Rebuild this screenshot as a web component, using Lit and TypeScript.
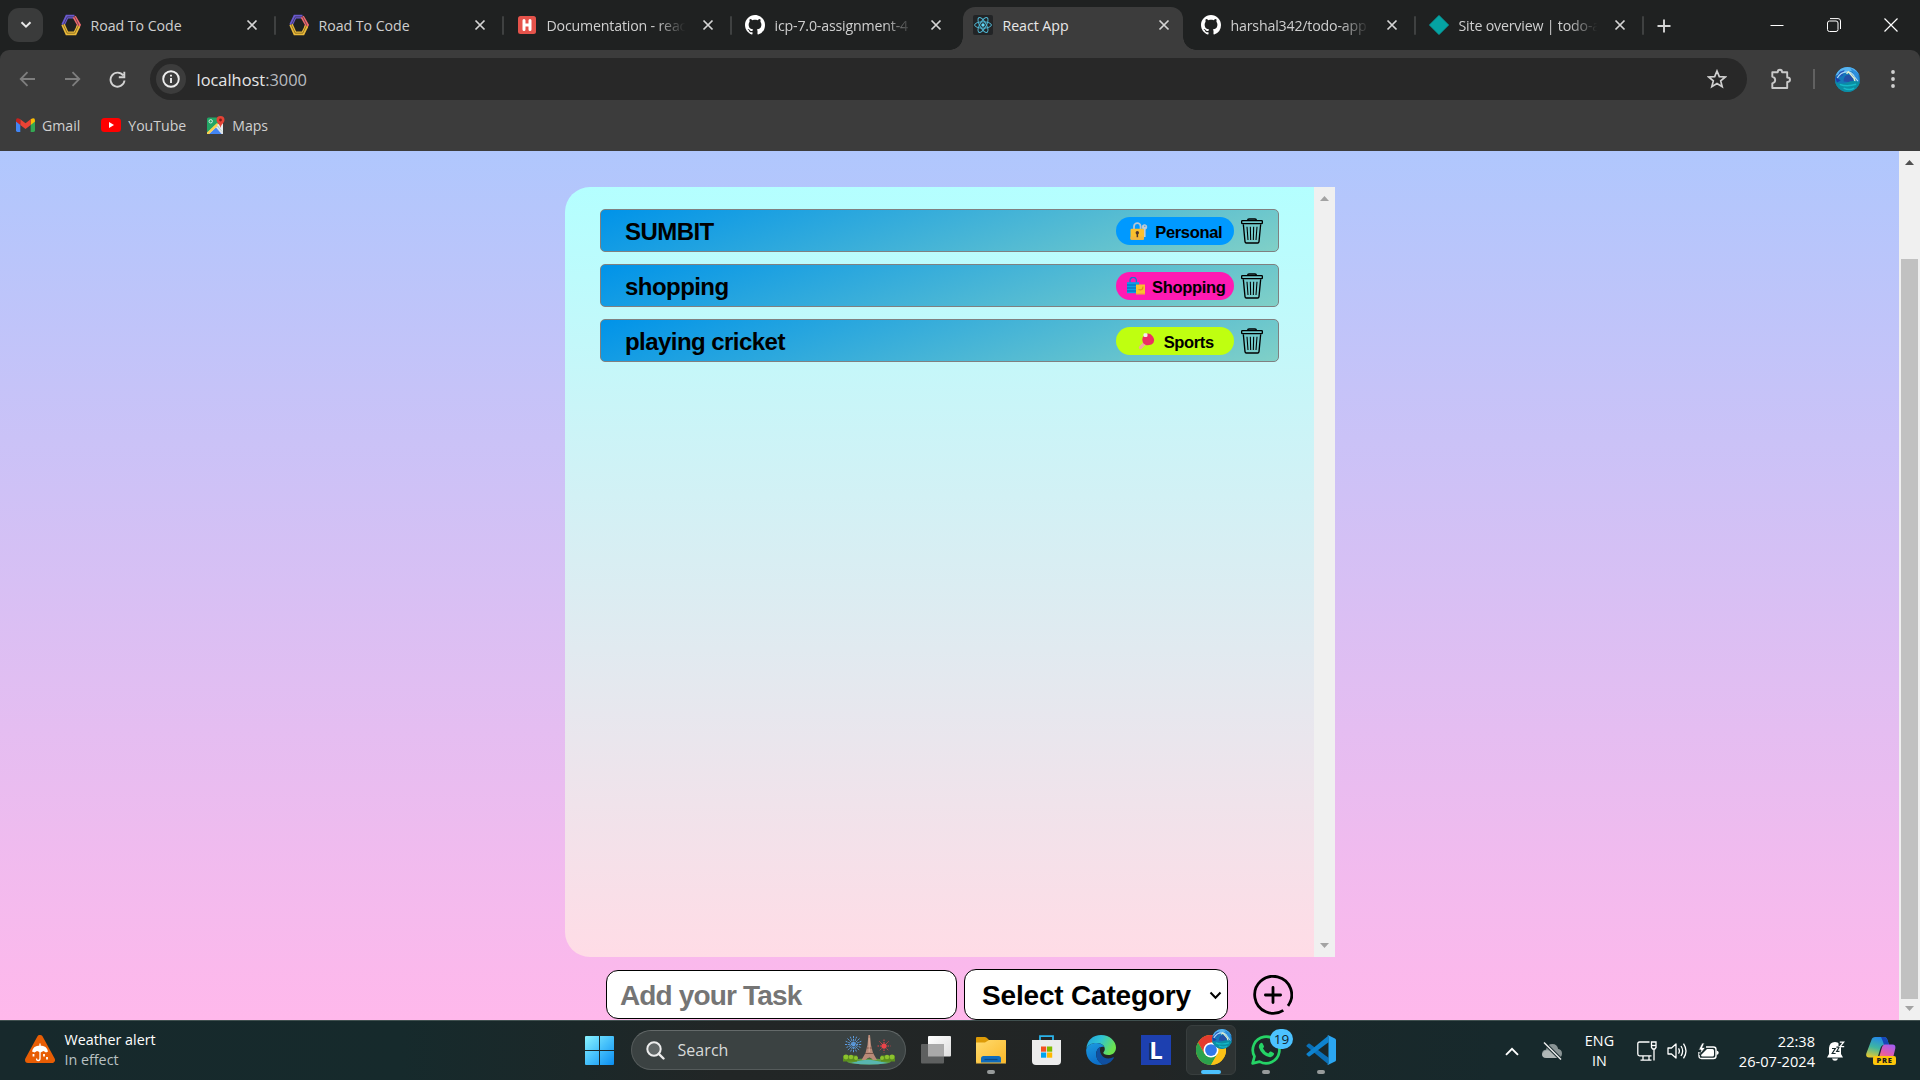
import { LitElement, html, css, nothing, type TemplateResult } from "lit";
import { customElement, property } from "lit/decorators.js";
import { classMap } from "lit/directives/class-map.js";

/* ---------- icons ---------- */

const hexLogo = html`<svg width="20" height="22" viewBox="0 0 20 22" fill="none" stroke-width="3.6">
  <path d="M2 11 L6 2.600 H13.500" stroke="#6a5acd" /><path d="M13.200 2.600 L18 11 L16.600 13.500" stroke="#ef6a6e" />
  <path d="M2 10.500 L6 19.400 H14 L17.600 12" stroke="#e9b93a" />
  <path d="M2.400 10.900 L6.300 2.800 H13.600 L17.600 10.900" stroke="#2a2540" stroke-width=".6" />
  <path d="M2.400 11.100 L6.200 19.200 H13.800 L17.600 11.100" stroke="#5a4613" stroke-width=".6" />
</svg>`;

const hashLogo = html`<svg width="18" height="18" viewBox="0 0 18 18">
  <rect width="18" height="18" rx="2.5" fill="#e5534b" />
  <path d="M6 4.600V13.400M12 4.600V13.400M6 9H12" stroke="#fff" stroke-width="3" stroke-linecap="round" />
</svg>`;

const github = html`<svg width="20" height="20" viewBox="0 0 16 16">
  <path fill="#fff" fill-rule="evenodd" d="M8 0C3.58 0 0 3.58 0 8c0 3.54 2.29 6.53 5.47 7.59.4.07.55-.17.55-.38 0-.19-.01-.82-.01-1.49-2.01.37-2.53-.49-2.69-.94-.09-.23-.48-.94-.82-1.13-.28-.15-.68-.52-.01-.53.63-.01 1.08.58 1.23.82.72 1.21 1.87.87 2.33.66.07-.52.28-.87.51-1.07-1.78-.2-3.64-.89-3.64-3.95 0-.87.31-1.59.82-2.15-.08-.2-.36-1.02.08-2.12 0 0 .67-.21 2.2.82.64-.18 1.32-.27 2-.27s1.36.09 2 .27c1.53-1.04 2.2-.82 2.2-.82.44 1.1.16 1.92.08 2.12.51.56.82 1.27.82 2.15 0 3.07-1.87 3.75-3.65 3.95.29.25.54.73.54 1.48 0 1.07-.01 1.93-.01 2.2 0 .21.15.46.55.38A8.01 8.01 0 0 0 16 8c0-4.42-3.58-8-8-8z" />
</svg>`;

const react = html`<svg width="20" height="20" viewBox="0 0 20 20">
  <rect width="20" height="20" rx="2" fill="#222426" />
  <g fill="none" stroke="#4fb6d3" stroke-width="1">
    <ellipse cx="10" cy="10" rx="8.4" ry="3.2" />
    <ellipse cx="10" cy="10" rx="8.4" ry="3.2" transform="rotate(60 10 10)" />
    <ellipse cx="10" cy="10" rx="8.4" ry="3.2" transform="rotate(120 10 10)" />
  </g>
  <circle cx="10" cy="10" r="1.7" fill="#61dafb" />
</svg>`;

const diamond = html`<svg width="20" height="20" viewBox="0 0 20 20">
  <path d="M10 .5 L19.5 10 L10 19.5 L.5 10Z" fill="#05a3a3" stroke="#05a3a3" stroke-linejoin="round" />
</svg>`;

const cross = html`<svg width="12" height="12" viewBox="0 0 12 12">
  <path d="M1.5 1.5L10.5 10.5M10.5 1.5L1.5 10.5" stroke="#d5d5d5" stroke-width="1.7" />
</svg>`;

const gmail = html`<svg width="19" height="14" viewBox="0 0 19 14">
  <path d="M0 3V12.6Q0 14 1.4 14H4.3V5.5Z" fill="#4285f4" />
  <path d="M19 3V12.6Q19 14 17.6 14H14.7V5.5Z" fill="#34a853" />
  <path d="M14.7 1.2L16.2.4Q19-.6 19 2.4V3.6L14.7 7Z" fill="#fbbc04" />
  <path d="M4.3 1.2L9.5 5.2L14.7 1.2V7L9.5 11L4.3 7Z" fill="#ea4335" />
  <path d="M4.3 1.2L2.8.4Q0-.6 0 2.4V3.6L4.3 7Z" fill="#c5221f" />
</svg>`;

const youtube = html`<svg width="20" height="14" viewBox="0 0 20 14">
  <rect width="20" height="14" rx="3.5" fill="#f00" /><path d="M8 4V10L13 7Z" fill="#fff" />
</svg>`;

const maps = html`<svg width="18" height="18" viewBox="0 0 18 18">
  <rect y="1.5" width="16" height="16.5" rx="1.5" fill="#22a565" />
  <path d="M0 17L9 8.5L16 16V18H1Z" fill="#dfe3e8" />
  <path d="M2 18L9 11.5L14.5 18Z" fill="#4285f4" />
  <path d="M0 16.5L10 7L12 8.6L2 18H0Z" fill="#fbd14b" />
  <path d="M10 9L16 5V16.5Z" fill="#e9ecef" />
  <circle cx="3.7" cy="5.3" r="1.7" fill="none" stroke="#d8f0e2" stroke-width="1" />
  <path d="M13.5 0A4 4 0 0 1 17.5 4C17.5 7 14 8 13.5 12C13 8 9.5 7 9.5 4A4 4 0 0 1 13.5 0Z" fill="#e54335" />
  <circle cx="13.5" cy="4" r="1.4" fill="#7c1c17" />
</svg>`;

const avatar = (size: number) => html`<svg width=${size} height=${size} viewBox="0 0 26 26">
  <defs><clipPath id="disc"><circle cx="13" cy="13" r="13" /></clipPath></defs>
  <g clip-path="url(#disc)">
    <rect width="26" height="26" fill="#1577b8" />
    <path d="M0 0H26V9Q20 3 13 5T0 9Z" fill="#58b4f0" />
    <path d="M1 12L5 5L10 3L8 9Z" fill="#2456b8" />
    <path d="M16 1L24 6L25 14L20 9Z" fill="#2c8fdc" />
    <path d="M2 12Q6 5 12 5T20 10L24 15" fill="none" stroke="#a8d9f5" stroke-width="1.4" />
    <path d="M9 15Q9 8 14 8T19 16Z" fill="#244fa6" />
    <path d="M12 7L14 5L20 12L21 16" fill="none" stroke="#e6efc8" stroke-width="1.5" />
    <path d="M0 15Q7 19 13 16T26 16V26H0Z" fill="#0b8ea3" />
    <path d="M5 18Q12 21 22 18M9 22Q15 25 20 22" fill="none" stroke="#14b8c8" stroke-width="1.5" />
    <path d="M0 10L6 14L2 16Z" fill="#1b3fa8" />
  </g>
</svg>`;

const trash = html`<svg width="22" height="26" viewBox="0 0 66 78" fill="none" stroke="#000" stroke-width="4" stroke-linejoin="round">
  <path d="M20 8V6Q20 3 24 3H42Q46 3 46 6V8" />
  <path d="M4 8H62Q64 8 64 10V15Q64 17 62 17H4Q2 17 2 15V10Q2 8 4 8Z" />
  <path d="M7 19L12 71Q12.500 75 16 75H50Q53.500 75 54 71L59 19" />
  <path d="M18 26L21 66M28 26L29 66M38 26L37 66M48 26L45 66" stroke-width="3.200" />
</svg>`;

const addCircle = html`<svg width="40" height="40" viewBox="0 0 40 40" fill="none" stroke="#000" stroke-width="2.8" stroke-linecap="round">
  <path d="M30.300 35.300A18.500 18.500 0 1 1 35 30.900" stroke-linecap="butt" />
  <path d="M20 12.400V27.600M12.400 20H27.600" />
</svg>`;

const lockKey = html`<svg width="18" height="18" viewBox="0 0 18 18">
  <circle cx="14.500" cy="5" r="2.300" fill="#c3ccd4" stroke="#c3ccd4" stroke-width="1" /><circle cx="14.800" cy="4.200" r=".8" fill="#4aa0e0" />
  <path d="M14.500 7V15" stroke="#c3ccd4" stroke-width="2.200" />
  <path d="M4 8V4.500A3.300 3.300 0 0 1 10.600 4.500V8" fill="none" stroke="#b9c6d2" stroke-width="1.800" />
  <rect x=".5" y="6.700" width="13.500" height="11" rx="1.200" fill="#fbc02d" />
  <rect x=".5" y="14.500" width="13.500" height="3.200" rx="1" fill="#f3b73d" />
  <circle cx="7.300" cy="10.700" r="1.700" fill="#4e342e" /><rect x="6.600" y="11" width="1.500" height="4.200" fill="#4e342e" />
</svg>`;

const bags = html`<svg width="18" height="18" viewBox="0 0 18 18">
  <path d="M3 6V3.500A3.200 3.200 0 0 1 9.400 3.500V6" fill="none" stroke="#1976d2" stroke-width="1.300" />
  <rect y="5.200" width="12" height="11" fill="#0aa0e6" />
  <path d="M0 8H12M0 11H12M0 14H12" stroke="#0b62ae" stroke-width="1.100" />
  <rect x="9" y="7.500" width="9" height="9.800" fill="#fbc02d" />
  <path d="M16 9.500Q16 14 11.500 12.500" fill="none" stroke="#e08a1c" stroke-width="1.100" />
  <path d="M9 16.800H18" stroke="#f0a63a" stroke-width="1" />
</svg>`;

const paddle = html`<svg width="18" height="18" viewBox="0 0 18 18">
  <path d="M2.500 15.500L7 11" stroke="#f2a99b" stroke-width="3.200" stroke-linecap="round" />
  <path d="M5.500 11.500Q2.500 6 7 2.800T14.800 4.500T13.500 12.500Q9 14 7.500 12.800Z" fill="#ec2f63" />
  <rect x="5.500" y="1.200" width="4" height="3.800" rx="1.300" fill="#f4eef0" />
</svg>`;

const arrow = (up: boolean, color: string) => html`<svg width="9" height="5" viewBox="0 0 9 5">
  <path d=${up ? "M0 5L4.5 0L9 5Z" : "M0 0L4.5 5L9 0Z"} fill=${color} />
</svg>`;

/* ---------- taskbar icons ---------- */

const windowsLogo = html`<svg width="29" height="29" viewBox="0 0 29 29">
  <defs><linearGradient id="win" x1="0" y1="0" x2="1" y2="1"><stop stop-color="#8af3ff" /><stop offset=".5" stop-color="#45c0fb" /><stop offset="1" stop-color="#0b8df0" /></linearGradient></defs>
  <path fill="url(#win)" d="M1 0H14V14H0V1Q0 0 1 0ZM15 0H28Q29 0 29 1V14H15ZM0 15H14V29H1Q0 29 0 28ZM15 15H29V28Q29 29 28 29H15Z" />
</svg>`;

const magnifier = html`<svg width="19" height="19" viewBox="0 0 19 19" fill="none" stroke="#ececec" stroke-width="2">
  <circle cx="8" cy="8" r="6.700" fill="#616767" /><path d="M12.800 12.800L17.500 17.500" stroke-width="2.400" stroke-linecap="round" />
</svg>`;

const eiffel = html`<svg width="52" height="30" viewBox="0 0 52 30">
  <g stroke="#5c9ce0" stroke-width="1" stroke-dasharray="2 .8">
    <path d="M10.500 1V18M2 9.500H19M4.500 3.500L16.500 15.500M16.500 3.500L4.500 15.500M7.300 1.700L13.700 17.300M13.700 1.700L7.300 17.300M2.700 6.300L18.300 12.700M18.300 6.300L2.700 12.700" />
  </g>
  <circle cx="41" cy="11" r="2.600" fill="#f0464b" />
  <g stroke="#e8434a" stroke-width="1" stroke-dasharray="1.500 1">
    <path d="M41 4.500V17.500M34.500 11H47.500M36.500 6.500L45.500 15.500M45.500 6.500L36.500 15.500" />
  </g>
  <ellipse cx="26" cy="26.500" rx="22" ry="3" fill="#5d9c3c" />
  <path d="M8 28Q22 24 28 25T45 28Q26 31 8 28Z" fill="#58b6b0" />
  <path d="M0 20.500H14V26.500H0Z" fill="#5c8f1d" /><path d="M38 20.500H52V26.500H38Z" fill="#5c8f1d" />
  <g fill="#8cc22e"><circle cx="3" cy="22" r="2.400" /><circle cx="8" cy="22" r="2.200" /><circle cx="13" cy="23" r="2" /><circle cx="39" cy="23" r="2" /><circle cx="44" cy="22" r="2.200" /><circle cx="49" cy="22" r="2.400" /></g>
  <path d="M25.400 0H27L28 10L30 18L34 25H30Q26.500 20 22.500 25H18.500L22.500 18L24.500 10Z" fill="#b98a78" />
  <path d="M23.500 13H29M22 18.500H30.500" stroke="#7b5548" stroke-width="1.200" />
  <path d="M26.200 3V17" stroke="#e0b8a4" stroke-width=".8" />
</svg>`;

const taskView = html`<svg width="30" height="28" viewBox="0 0 30 28">
  <defs><linearGradient id="tv" x1="0" y1="0" x2="1" y2="1"><stop stop-color="#fff" /><stop offset="1" stop-color="#dedede" /></linearGradient></defs>
  <rect x="7" width="23" height="20.500" rx="1" fill="url(#tv)" />
  <rect y="8" width="23" height="19.500" rx="1" fill="#5e6060" />
  <path d="M7 8H23V20.500H7Z" fill="#a9a9a9" />
</svg>`;

const explorer = html`<svg width="30" height="28" viewBox="0 0 30 28">
  <defs><linearGradient id="fold" x1="0" y1="0" x2="1" y2="1"><stop stop-color="#ffdb6e" /><stop offset="1" stop-color="#fbb829" /></linearGradient></defs>
  <path d="M0 2Q0 1 1 1H9Q10.500 1 13 4H29Q30 4 30 5V12H0Z" fill="#dd9b07" />
  <path d="M0 6.500H9L13 4H29Q30 4 30 5V26Q30 27 29 27H1Q0 27 0 26Z" fill="url(#fold)" />
  <path d="M5 27V22.500Q5 20 7.500 20H22.500Q25 20 25 22.500V27Z" fill="#0f6cbd" />
  <path d="M8.500 23.500H21.500" stroke="#0b4a86" stroke-width="1.200" /><path d="M0 27H30" stroke="#f6c142" stroke-width="1" />
</svg>`;

const store = html`<svg width="29" height="30" viewBox="0 0 29 30">
  <path d="M8 6V1.200H21V6" fill="none" stroke="#2bb4ea" stroke-width="1.800" />
  <path d="M0 5H29V26Q29 30 25 30H4Q0 30 0 26Z" fill="#ececec" />
  <path fill="#f25022" d="M9 11.500H14.200V16.700H9Z" /><path fill="#7fba00" d="M15 11.500H20.200V16.700H15Z" />
  <path fill="#00a4ef" d="M9 17.500H14.200V22.700H9Z" /><path fill="#ffb900" d="M15 17.500H20.200V22.700H15Z" />
</svg>`;

const edge = html`<svg width="30" height="30" viewBox="0 0 30 30">
  <defs>
    <linearGradient id="eg" x1="0" y1="0" x2="1" y2=".4"><stop stop-color="#1f9fe0" /><stop offset=".5" stop-color="#2fc3d3" /><stop offset="1" stop-color="#6be34f" /></linearGradient>
    <linearGradient id="eb" x1="0" y1="0" x2=".3" y2="1"><stop stop-color="#1c9be0" /><stop offset="1" stop-color="#0d6fc9" /></linearGradient>
  </defs>
  <path d="M.3 14C1 5 7 0 15 0C24 0 30 6.500 30 12.500C30 17.500 26.500 20 22.500 20C19 20 17.300 18.800 17.300 17.800C17.300 17 18.800 16.500 18.800 14C18.800 10.500 15.300 8 11 8C6 8 1.500 10 .3 14Z" fill="url(#eg)" />
  <path d="M.2 14.500C1.500 10 6 8 10.500 8C14 8 17 9.500 18.300 12C14 10.500 10.200 14 10.200 19C10.200 24 13 28 17.500 29.600C8 31.500-.5 24.500.2 14.500Z" fill="url(#eb)" />
  <path d="M10.200 19C10.200 15 12 12.500 14.600 11.900C12.500 16.500 16 23.500 22.500 23.500C24.500 23.500 26.500 22.500 27.200 22.300C28 22.100 28 22.700 27.700 23.200C25.500 27 21.500 29.500 17.500 29.700C13 28 10.200 24 10.200 19Z" fill="#0f4fa0" />
</svg>`;

const lTile = html`<div class="l-tile">L</div>`;

const chrome = html`<svg width="30" height="30" viewBox="0 0 48 48">
  <circle cx="24" cy="24" r="24" fill="#fbc116" />
  <path d="M3.200 12A24 24 0 0 1 44.800 12L24 12L24 24L13.600 30Z" fill="#e33b2e" />
  <path d="M3.200 12A24 24 0 0 0 24 48L34.400 30L24 24L13.600 30Z" fill="#2ca24c" />
  <path d="M24 48A24 24 0 0 0 44.800 12H24L34.400 30Z" fill="#fbc116" />
  <circle cx="24" cy="24" r="12" fill="#fff" /><circle cx="24" cy="24" r="9.400" fill="#3078e8" />
</svg>`;

const whatsapp = html`<svg width="30" height="30" viewBox="0 0 30 30" fill="none">
  <path d="M1.600 28.400L3.500 21.500A13.300 13.300 0 1 1 8.600 26.600Z" stroke="#25d366" stroke-width="2.700" stroke-linejoin="round" />
  <path d="M9.500 8.200Q10.500 7.300 11.500 8.300L13 11.300Q13.200 12 12 13.500Q14 17.200 17.300 18.500L18.800 16.800Q19.300 16.300 20 16.600L22.700 18Q23.300 18.500 22.700 20Q21 22.700 18 22Q10.500 20 7.900 12.500Q7.500 10 9.500 8.200Z" fill="#25d366" />
</svg>`;

const vscode = html`<svg width="30" height="30" viewBox="0 0 30 30">
  <path d="M.7 10.200L2.300 8.700Q3 8.200 3.800 8.700L22.500 22.800V29.500L.7 11.600Q0 11 .7 10.200Z" fill="#0a70b8" />
  <path d="M.7 19.800L2.300 21.300Q3 21.800 3.800 21.300L22.500 7.200V.5L.7 18.400Q0 19 .7 19.800Z" fill="#0e83cf" />
  <path d="M22.300.3L29 3.400Q30 4 30 5V25Q30 26 29 26.600L22.300 29.800Q21.300 30 20.500 29.200Q22.500 30 22.500 28V2Q22.500 0 20.500.8Q21.300 0 22.300.3Z" fill="#2ba6f2" />
</svg>`;

const weather = html`<svg width="30" height="28" viewBox="0 0 30 28">
  <path d="M15 3L27 25H3Z" fill="#e85d04" stroke="#e85d04" stroke-width="6" stroke-linejoin="round" />
  <path d="M7 16.500Q8 10.500 15 10.500T23 16.500L21 17.500L18.500 16L15.500 17.500L12 16L9.500 17.500Z" fill="#fff" />
  <path d="M15 8.500V11M15 16V23.500Q15 25.500 13.200 25.500T11.600 23.500" fill="none" stroke="#fff" stroke-width="1.300" />
  <path d="M8.500 19V21.500M19 19V21.500M22 22V24.500" stroke="#fff" stroke-width="1.800" />
</svg>`;

const chevronUp = html`<svg width="14" height="9" viewBox="0 0 14 9"><path d="M1 7.800L7 1.800L13 7.800" fill="none" stroke="#fff" stroke-width="1.900" /></svg>`;

const cloudOff = html`<svg width="22" height="18" viewBox="0 0 22 18">
  <path d="M5.500 16Q1 16 1 12T5 7.800Q6 2 11.500 2Q16 2 17.200 7Q21 7.500 21 11.500T17 16Z" fill="#8a9495" />
  <path d="M3 9.500Q7 7 10.500 10L17 16H5.500Q1 16 1 12Z" fill="#c9cfcf" opacity=".6" /><path d="M2.500 0L20 17.500" stroke="#17292c" stroke-width="3.400" /><path d="M3 .5L20 17.500" stroke="#f0f0f0" stroke-width="1.400" />
</svg>`;

const monitor = html`<svg width="20" height="20" viewBox="0 0 20 20" fill="none" stroke="#fff" stroke-width="1.300">
  <path d="M12.500 1H2.500Q.8 1 .8 2.700V13Q.8 14.800 2.500 14.800H14.500M6 15V19M12 15V19M3.500 19.200H14.500" />
  <path d="M14.500 1H19V6.500L17.800 8H15.700L14.500 6.500ZM17 8V19.500" /><path d="M15 4.500H19" />
</svg>`;

const speaker = html`<svg width="21" height="18" viewBox="0 0 21 18" fill="none" stroke="#fff" stroke-width="1.300">
  <path d="M1 6H4.500L9 2V16L4.500 12H1Z" stroke-linejoin="round" />
  <path d="M11.500 6.300Q13.300 9 11.500 11.700M14 4Q17.300 9 14 14M16.500 1.700Q21.500 9 16.500 16.300" />
</svg>`;

const battery = html`<svg width="21" height="17" viewBox="0 0 21 17">
  <path d="M8 4H15.500Q18 4 18 6.500V13Q18 15.500 15.500 15.500H3.500Q1 15.500 1 13V9" fill="none" stroke="#fff" stroke-width="1.400" />
  <path d="M18.500 7.500Q20.700 8 20.700 9.800T18.500 12Z" fill="#fff" />
  <path d="M9 6H14.500Q16 6 16 7.500V12Q16 13.500 14.500 13.500H4.500Q3 13.500 3 12Z" fill="#fff" />
  <path d="M4 0L.5 7H3L1.500 12L7.500 4.500H4.500L6.500 0Z" fill="#fff" stroke="#17292c" stroke-width=".8" />
</svg>`;

const bell = html`<svg width="18" height="20" viewBox="0 0 18 20">
  <path d="M8 1Q13.500 1 14 7V13L16 16.500H0L2 13V7Q2.500 1 8 1Z" fill="#fff" />
  <path d="M5 17.500H11Q10.500 19.800 8 19.800T5 17.500Z" fill="#fff" />
  <path d="M5 7.500H8.300L5.200 12.500H8.600M9.400 6.200H12.200L9.700 10.300H12.500" fill="none" stroke="#17292c" stroke-width="1.200" />
  <path d="M11.500 0V5L18 7V0Z" fill="#17292c" />
  <path d="M12.800 1.200H16.600L13 5.600H17.200" fill="none" stroke="#fff" stroke-width="1.300" />
</svg>`;

const copilot = html`<svg width="30" height="26" viewBox="0 0 30 26">
  <defs>
    <linearGradient id="ca" x1=".5" y1="0" x2=".2" y2="1"><stop stop-color="#2488e8" /><stop offset=".5" stop-color="#3fb6a0" /><stop offset="1" stop-color="#e8c92e" /></linearGradient>
    <linearGradient id="cb" x1=".8" y1="0" x2=".3" y2="1"><stop stop-color="#a35df2" /><stop offset=".6" stop-color="#e55ba8" /><stop offset="1" stop-color="#f88a50" /></linearGradient>
  </defs>
  <path d="M6 1.500Q7 0 9 0H18Q20.500 0 21.500 3L23 8H18Q15.500 8 14.500 11L12 19Q11.500 20.500 9 20.500H3Q-.5 20.500.3 16.500Z" fill="url(#ca)" />
  <path d="M15 0H18Q20.500 0 21.500 3L23 8H18Q17 4 15 0Z" fill="#1747b8" />
  <path d="M19 7.500H26.500Q30 7.500 29.300 11.500L27 21Q26.500 24 23 24H12L15.500 12Q16.500 7.500 19 7.500Z" fill="url(#cb)" />
</svg>`;

/* ---------- browser frame ---------- */

interface Tab { title: string; icon: TemplateResult; active?: boolean; divider?: boolean }

const TABS: Tab[] = [
  { title: "Road To Code", icon: hexLogo, divider: true },
  { title: "Road To Code", icon: hexLogo, divider: true },
  { title: "Documentation - reac", icon: hashLogo, divider: true },
  { title: "icp-7.0-assignment-4", icon: github },
  { title: "React App", icon: react, active: true },
  { title: "harshal342/todo-app", icon: github, divider: true },
  { title: "Site overview | todo-a", icon: diamond, divider: true },
];

@customElement("browser-tabs")
export class BrowserTabs extends LitElement {
  static styles = css`
    :host { display: flex; height: 50px; background: #1f2121; color: #cfcfcf; font-size: 14.2px; }
    svg { display: block; flex: none; }
    .search { width: 35px; height: 34px; margin: 8px 5px 0 8px; border-radius: 11px; background: #3a3b3b; display: grid; place-items: center; }
    .tab { box-sizing: border-box; width: 228px; padding: 0 18.5px 0 12.5px; display: flex; align-items: center; position: relative; }
    .icon { width: 20px; display: grid; place-items: center; margin-right: 10px; }
    .title { flex: 1; min-width: 0; height: 24px; line-height: 24px; margin: 1px 11px 0 0; white-space: nowrap; letter-spacing: -.05px; }
    .title.fade { letter-spacing: -.18px; -webkit-mask-image: linear-gradient(90deg, #000 76%, transparent 96%); mask-image: linear-gradient(90deg, #000 76%, transparent 96%); }
    .divider::after { content: ""; position: absolute; right: 0; top: 16px; width: 2px; height: 19px; border-radius: 1px; background: #3f4141; }
    .active { color: #e8e8e8; }
    .active::before { content: ""; position: absolute; inset: 7px 5px 0 3px; border-radius: 12px 12px 0 0; background: #3c3c3c; }
    .active > * { position: relative; }
    .active > .flare { position: absolute; bottom: 0; width: 13px; height: 13px; }
    .flare.l { left: -10px; background: radial-gradient(circle at 0 0, transparent 12.5px, #3c3c3c 13px); }
    .flare.r { right: -8px; background: radial-gradient(circle at 100% 0, transparent 12.5px, #3c3c3c 13px); }
    .plus { margin: 18.5px 0 0 12.5px; }
    .controls { margin-left: auto; display: flex; align-items: center; gap: 43px; padding-right: 22px; }
  `;

  render() {
    return html`
      <div class="search"><svg width="12" height="8" viewBox="0 0 12 8"><path d="M1.500 1.200L6 5.700L10.500 1.200" fill="none" stroke="#e8e8e8" stroke-width="2" /></svg></div>
      ${TABS.map((t) => html`
        <div class=${classMap({ tab: true, active: !!t.active, divider: !!t.divider })}>
          ${t.active ? html`<i class="flare l"></i><i class="flare r"></i>` : nothing}
          <span class="icon">${t.icon}</span>
          <span class=${classMap({ title: true, fade: t.title.length > 15 })}>${t.title}</span>
          ${cross}
        </div>`)}
      <svg class="plus" width="14" height="14" viewBox="0 0 14 14"><path d="M7 .5V13.500M.5 7H13.500" stroke="#d5d5d5" stroke-width="1.900" /></svg>
      <div class="controls">
        <svg width="14" height="14" viewBox="0 0 14 14"><path d="M.5 7.500H13.500" stroke="#fff" stroke-width="1" /></svg>
        <svg width="14" height="14" viewBox="0 0 14 14" fill="none" stroke="#fff"><rect x=".5" y="3" width="10.500" height="10.500" rx="2" /><path d="M3 .6H11Q13.500.6 13.500 3V11" /></svg>
        <svg width="14" height="14" viewBox="0 0 14 14"><path d="M.5.5L13.500 13.500M13.500.5L.5 13.500" stroke="#fff" stroke-width="1.200" /></svg>
      </div>`;
  }
}

@customElement("browser-toolbar")
export class BrowserToolbar extends LitElement {
  static styles = css`
    :host { display: block; box-sizing: border-box; height: 101px; background: #3c3c3c; padding-top: 8px; border-radius: 9px 9px 0 0; }
    svg { display: block; flex: none; }
    .row { height: 42px; display: flex; align-items: center; }
    .nav { width: 150px; box-sizing: border-box; padding-left: 19px; display: flex; align-items: center; gap: 28px; }
    .omni { width: 1597px; height: 42px; border-radius: 21px; background: #282828; box-sizing: border-box; padding: 0 20px 0 6px; display: flex; align-items: center; }
    .info { width: 30px; height: 30px; border-radius: 50%; background: #3c3c3c; display: grid; place-items: center; margin-right: 10.5px; }
    .url { flex: 1; font-size: 16.4px; color: #e6e6e6; }
    .port { color: #b9bcc0; }
    .ext { margin-left: 23px; }
    .bar { width: 1.5px; height: 20px; background: #616161; margin: 0 20px 0 21px; }
    .menu { margin-left: 31px; }
    .marks { display: flex; align-items: center; height: 40px; padding: 5px 0 0 15.5px; font-size: 14.1px; color: #d0d0d0; }
    .mark { display: flex; align-items: center; gap: 7.5px; margin-right: 20.5px; }
  `;

  render() {
    return html`
      <div class="row">
        <div class="nav">
          <svg width="17" height="16" viewBox="0 0 17 16" fill="none" stroke="#7e7e7e" stroke-width="1.800"><path d="M16 8H2M8.500 1.200L1.700 8L8.500 14.800" /></svg>
          <svg width="17" height="16" viewBox="0 0 17 16" fill="none" stroke="#7e7e7e" stroke-width="1.800"><path d="M1 8H15M8.500 1.200L15.300 8L8.500 14.800" /></svg>
          <svg width="17" height="17" viewBox="0 0 17 17" fill="none" stroke="#d3d3d3" stroke-width="1.900"><path d="M14.200 4.500A7 7 0 1 0 15.500 9.500M15.300.8V6.300H9.800" /></svg>
        </div>
        <div class="omni">
          <span class="info"><svg width="18" height="18" viewBox="0 0 18 18" fill="none" stroke="#ededed"><circle cx="9" cy="9" r="7.800" stroke-width="1.900" /><path d="M9 8V13M9 4.800V6.600" stroke-width="1.900" /></svg></span>
          <span class="url">localhost<span class="port">:3000</span></span>
          <svg width="20" height="20" viewBox="0 0 20 20"><path d="M10 2L12.300 7.600L18.300 8L13.700 11.900L15.200 17.800L10 14.600L4.800 17.800L6.300 11.900L1.700 8L7.700 7.600Z" fill="none" stroke="#cfcfcf" stroke-width="1.700" /></svg>
        </div>
        <svg class="ext" width="22" height="22" viewBox="0 0 22 22"><path d="M2.300 4.300H7.700Q7.700 1.800 9.900 1.800T12.100 4.300H17.200V9.500Q20 9.500 20 11.700T17.200 13.900V20H2.300V15.300Q5.200 14.500 5.200 12T2.300 8.700Z" fill="none" stroke="#c9c9c9" stroke-width="1.900" stroke-linejoin="round" /></svg>
        <div class="bar"></div>
        ${avatar(25)}
        <svg class="menu" width="4" height="18" viewBox="0 0 4 18" fill="#d0d0d0"><circle cx="2" cy="2" r="1.900" /><circle cx="2" cy="9" r="1.900" /><circle cx="2" cy="16" r="1.900" /></svg>
      </div>
      <div class="marks">
        <span class="mark">${gmail}Gmail</span><span class="mark">${youtube}YouTube</span><span class="mark">${maps}Maps</span>
      </div>`;
  }
}

/* ---------- page ---------- */

@customElement("scroll-rail")
export class ScrollRail extends LitElement {
  static styles = css`
    :host { box-sizing: border-box; width: 21px; flex: none; background: #f0f0f0; display: flex; flex-direction: column; align-items: center; padding: 9px 0 9px; }
    svg { display: block; }
    .track { flex: 1; width: 17px; padding: 94px 0 7px; display: flex; }
    .thumb { flex: 1; background: #c1c1c1; }
  `;
  @property({ type: Boolean }) scrollable = false;

  render() {
    return html`
      ${arrow(true, this.scrollable ? "#505050" : "#a3a3a3")}
      <div class="track">${this.scrollable ? html`<div class="thumb"></div>` : nothing}</div>
      ${arrow(false, "#a3a3a3")}`;
  }
}

interface Todo { task: string; category: string; icon: TemplateResult; tone: string }

const TODOS: Todo[] = [
  { task: "SUMBIT", category: "Personal", icon: lockKey, tone: "blue" },
  { task: "shopping", category: "Shopping", icon: bags, tone: "pink" },
  { task: "playing cricket", category: "Sports", icon: paddle, tone: "lime" },
];

@customElement("todo-page")
export class TodoPage extends LitElement {
  static styles = css`
    :host { display: flex; height: 869px; overflow: hidden; font-family: "Liberation Sans", Arial, sans-serif; font-weight: 700; color: #000; }
    svg { display: block; flex: none; }
    .canvas { width: 1899px; display: flex; flex-direction: column; padding: 36px 0 0 565px; box-sizing: border-box; background: linear-gradient(180deg, #b0c7fd, #ffb8eb); }
    .panel { width: 770px; height: 770px; display: flex; border-radius: 25px 0 0 25px; overflow: hidden; background: linear-gradient(180deg, #b4ffff, #ffdce6); }
    .list { flex: 1; display: flex; flex-direction: column; gap: 12px; padding: 22px 35px 0; }
    .todo { box-sizing: border-box; height: 43px; border: 1px solid #808080; border-radius: 5px; padding: 0 15px 0 24px; display: flex; align-items: center; background: linear-gradient(160deg, #0093e9, #80d0c7); }
    .task { flex: 1; font-size: 24px; letter-spacing: -.55px; line-height: 28px; padding-top: 3px; }
    .badge { width: 118px; height: 28px; box-sizing: border-box; border-radius: 14px; padding-left: 2px; display: flex; align-items: center; justify-content: center; gap: 7.5px; margin-right: 7px; font-size: 16.5px; letter-spacing: -.35px; }
    .badge span { padding-top: 3px; }
    .blue { background: #0099ff; }
    .pink { background: #ff1ab3; }
    .lime { background: #bfff10; }
    .form { display: flex; align-items: center; padding: 12px 0 0 41px; }
    .entry { box-sizing: border-box; width: 351px; height: 49px; border: 1px solid #000; border-radius: 12px; padding: 2px 13px 0; background: #fff; font: inherit; font-size: 28px; letter-spacing: -.85px; outline: 0; }
    .entry::placeholder { color: #757575; opacity: 1; }
    .select { box-sizing: border-box; width: 264px; height: 51px; border: 1px solid #000; border-radius: 12px; margin: 0 25px 0 7px; padding: 2px 5px 0 17px; background: #fff; display: flex; align-items: center; justify-content: space-between; font-size: 28px; letter-spacing: -.18px; white-space: nowrap; }
  `;

  render() {
    return html`
      <div class="canvas">
        <section class="panel">
          <div class="list">
            ${TODOS.map((t) => html`
              <div class="todo">
                <span class="task">${t.task}</span>
                <span class="badge ${t.tone}">${t.icon}<span>${t.category}</span></span>
                ${trash}
              </div>`)}
          </div>
          <scroll-rail></scroll-rail>
        </section>
        <div class="form">
          <input class="entry" placeholder="Add your Task" />
          <div class="select">Select Category<svg width="13" height="9" viewBox="0 0 13 9"><path d="M1.500 1.500L6.500 6.800L11.500 1.500" fill="none" stroke="#000" stroke-width="2" /></svg></div>
          ${addCircle}
        </div>
      </div>
      <scroll-rail scrollable></scroll-rail>`;
  }
}

/* ---------- taskbar ---------- */

interface App { icon: TemplateResult; state?: "open" | "focused"; badge?: TemplateResult }

const APPS: App[] = [
  { icon: taskView },
  { icon: explorer, state: "open" },
  { icon: store },
  { icon: edge },
  { icon: lTile },
  { icon: chrome, state: "focused", badge: html`<span class="face">${avatar(20)}</span>` },
  { icon: whatsapp, state: "open", badge: html`<span class="count">19</span>` },
  { icon: vscode, state: "open" },
];

@customElement("task-bar")
export class TaskBar extends LitElement {
  static styles = css`
    :host { display: flex; box-sizing: border-box; height: 60px; border-top: 1px solid #40504f; color: #fff; font-size: 14.3px; line-height: 20px;
      background: linear-gradient(90deg, #17292c 0, #162a2c 400px, #1b2829 580px, #222626 720px, #222525 1150px, #19282a 1320px, #17292c 1500px); }
    svg { display: block; flex: none; }
    .weather { width: 585px; box-sizing: border-box; padding: 9px 0 0 25px; display: flex; gap: 9.5px; }
    .weather svg { margin-top: 5px; }
    .dim { color: #b9c1c2; }
    .start { margin-top: 15px; }
    .search { width: 275px; height: 40px; box-sizing: border-box; margin: 9px 5px 0 17px; border-radius: 20px; border: 1px solid #555b5b; border-top-color: #646a6a; background: #3b4242; padding: 0 10px 0 14px; display: flex; align-items: center; color: #d8dada; font-size: 16px; }
    .search span { flex: 1; padding-left: 12.5px; letter-spacing: .05px; }
    .apps { display: flex; gap: 5px; padding: 4px 0; }
    .app { position: relative; width: 50px; height: 50px; box-sizing: border-box; border-radius: 6px; display: grid; place-items: center; }
    .app.focused { background: #2d3333; border: 1px solid #383e3e; }
    .app.open::after, .app.focused::after { content: ""; position: absolute; bottom: 1px; left: 50%; width: 8px; height: 4px; margin-left: -4px; border-radius: 2px; background: #979b9b; }
    .app.focused::after { bottom: 0; width: 20px; margin-left: -10px; background: #4cc2ff; }
    .l-tile { width: 30px; height: 30px; background: #1d40b0; color: #fff; font: 700 24px/30px "Open Sans", sans-serif; text-align: center; text-shadow: -2px 1px 0 #0c2460; }
    .face { position: absolute; right: 3px; top: 3px; }
    .count { position: absolute; right: -2px; top: 4px; width: 23px; height: 20px; border-radius: 10px; background: #4cc2ff; color: #10222c; font-size: 13.500px; line-height: 20px; text-align: center; }
    .tray { margin-left: auto; display: flex; align-items: center; height: 60px; padding-right: 24px; }
    .lang { width: 38px; text-align: center; margin: 0 18px 0 18px; letter-spacing: .2px; }
    .clock { text-align: right; width: 90px; margin: 0 12px 0 6.5px; line-height: 20px; font-size: 14.6px; white-space: nowrap; padding-bottom: 1px; }
    .cloud { margin: 0 0 0 22px; }
    .gap { margin-left: 10px; }
    .pilot { position: relative; margin-left: 21px; padding-bottom: 2px; }
    .pre { position: absolute; left: 7px; bottom: 0; width: 23px; height: 9px; border-radius: 2px; background: #fdc60a; color: #1b1b1b; font-size: 7.500px; font-weight: 800; line-height: 9px; letter-spacing: .7px; text-align: center; }
  `;

  render() {
    return html`
      <div class="weather">${weather}<div><div>Weather alert</div><div class="dim">In effect</div></div></div>
      <div class="start">${windowsLogo}</div>
      <div class="search">${magnifier}<span>Search</span>${eiffel}</div>
      <div class="apps">
        ${APPS.map((a) => html`<div class="app ${a.state ?? ""}">${a.icon}${a.badge ?? nothing}</div>`)}
      </div>
      <div class="tray">
        ${chevronUp}
        <span class="cloud">${cloudOff}</span>
        <div class="lang"><div>ENG</div><div>IN</div></div>
        ${monitor}<span class="gap">${speaker}</span><span class="gap">${battery}</span>
        <div class="clock"><div>22:38</div><div>26-07-2024</div></div>
        ${bell}
        <div class="pilot">${copilot}<span class="pre">PRE</span></div>
      </div>`;
  }
}

@customElement("app-root")
export class AppRoot extends LitElement {
  static styles = css`
    :host { display: flex; flex-direction: column; width: 1920px; height: 1080px; overflow: hidden; background: #1f2121; font-family: "Open Sans", "Noto Sans", sans-serif; }
  `;

  render() {
    return html`
      <browser-tabs></browser-tabs>
      <browser-toolbar></browser-toolbar>
      <todo-page></todo-page>
      <task-bar></task-bar>`;
  }
}
